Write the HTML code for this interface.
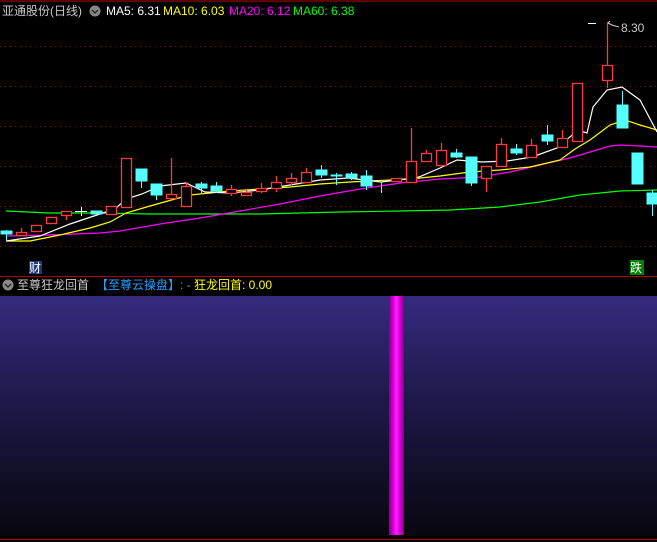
<!DOCTYPE html>
<html><head><meta charset="utf-8"><style>
html,body{margin:0;padding:0;background:#000;width:657px;height:542px;overflow:hidden;font-family:"Liberation Sans","Noto Sans CJK SC",sans-serif}
.t{position:absolute;font-size:12px;line-height:14px;white-space:nowrap}
</style></head><body>
<svg width="657" height="542" style="position:absolute;left:0;top:0">
<defs><linearGradient id="g" x1="0" y1="0" x2="0" y2="1"><stop offset="0" stop-color="#342b7e"/><stop offset="0.45" stop-color="#1d1848"/><stop offset="1" stop-color="#08070e"/></linearGradient>
<linearGradient id="b" x1="0" y1="0" x2="1" y2="0"><stop offset="0" stop-color="#80007f"/><stop offset="0.3" stop-color="#e000e0"/><stop offset="0.5" stop-color="#ff20ff"/><stop offset="0.7" stop-color="#e000e0"/><stop offset="1" stop-color="#80007f"/></linearGradient></defs>
<line x1="0" y1="1" x2="657" y2="1" stroke="#b00000"/>
<line x1="0" y1="276.5" x2="657" y2="276.5" stroke="#b00000"/>
<g stroke="#a00000" stroke-dasharray="1,4">
<line x1="0" y1="46.5" x2="657" y2="46.5"/><line x1="0" y1="86.5" x2="657" y2="86.5"/><line x1="0" y1="126.5" x2="657" y2="126.5"/><line x1="0" y1="166.5" x2="657" y2="166.5"/><line x1="0" y1="206.5" x2="657" y2="206.5"/><line x1="0" y1="246.5" x2="657" y2="246.5"/></g>
<rect x="0" y="296" width="657" height="240" fill="url(#g)"/>
<rect x="389" y="296" width="15" height="239" fill="url(#b)"/>
<line x1="0" y1="539.5" x2="657" y2="539.5" stroke="#b00000"/>
<g fill="none" stroke-width="1.2">
<polyline stroke="#00ff00" points="6,211 50,213 100,213 150,214 200,214 260,214 300,213 340,212 400,211 450,210 500,207 540,202 580,195 620,191 657,190"/>
<polyline stroke="#ff00ff" points="6,236 50,235 100,233 120,231 160,224 200,218 240,211 280,204 320,196 360,189 400,183 440,179 480,177 510,172 540,165 570,158 590,152 610,146 620,145 640,146 657,147"/>
<polyline stroke="#ffff00" points="6,241 30,241 60,235 90,228 110,222 126,213 150,206 175,199 190,195 230,191 260,189 290,187 320,184 350,182 390,180 410,179 440,176 470,172 500,170 530,167 560,160 575,149 590,140 610,125 625,120 640,125 657,130"/>
<polyline stroke="#ffffff" points="6,241 40,236 70,224 100,214 115,209 126,199 142,194 160,186 186,183 205,192 230,193 260,190 290,185 320,180 348,178 381,182 398,180 419,177 440,168 457,160 482,162 507,161 532,157 557,148 578,130 587,133 593,107 607,90 622,87 640,100 657,132"/>
</g>
<g stroke="#ff3a3a" fill="#000" stroke-width="1.3">
<line x1="21.5" y1="228" x2="21.5" y2="236"/><rect x="16.5" y="232.5" width="10" height="3"/>
<rect x="31.5" y="225.5" width="10" height="6"/>
<rect x="46.5" y="217.5" width="10" height="6"/>
<line x1="66.5" y1="211" x2="66.5" y2="220"/><rect x="61.5" y="211.5" width="10" height="4"/>
<rect x="106.5" y="206.5" width="10" height="8"/>
<rect x="121.5" y="158.5" width="10" height="49"/>
<line x1="171.5" y1="158" x2="171.5" y2="198"/><rect x="166.5" y="194.5" width="10" height="4"/>
<line x1="186.5" y1="182" x2="186.5" y2="206"/><rect x="181.5" y="186.5" width="10" height="20"/>
<line x1="231.5" y1="185" x2="231.5" y2="196"/><rect x="226.5" y="189.5" width="10" height="4"/>
<line x1="246.5" y1="190" x2="246.5" y2="196"/><rect x="241.5" y="192.5" width="10" height="3"/>
<line x1="261.5" y1="183" x2="261.5" y2="193"/><rect x="256.5" y="188.5" width="10" height="3"/>
<line x1="276.5" y1="176" x2="276.5" y2="192"/><rect x="271.5" y="182.5" width="10" height="6"/>
<line x1="291.5" y1="173" x2="291.5" y2="185"/><rect x="286.5" y="178.5" width="10" height="4"/>
<line x1="306.5" y1="168" x2="306.5" y2="183"/><rect x="301.5" y="172.5" width="10" height="10"/>
<rect x="391.5" y="178.5" width="10" height="3"/>
<line x1="411.5" y1="128" x2="411.5" y2="182"/><rect x="406.5" y="161.5" width="10" height="21"/>
<line x1="426.5" y1="150" x2="426.5" y2="162"/><rect x="421.5" y="153.5" width="10" height="8"/>
<line x1="441.5" y1="143" x2="441.5" y2="166"/><rect x="436.5" y="150.5" width="10" height="15"/>
<line x1="486.5" y1="166" x2="486.5" y2="192"/><rect x="481.5" y="166.5" width="10" height="12"/>
<line x1="501.5" y1="138" x2="501.5" y2="167"/><rect x="496.5" y="144.5" width="10" height="22"/>
<line x1="531.5" y1="139" x2="531.5" y2="157"/><rect x="526.5" y="145.5" width="10" height="12"/>
<line x1="562.5" y1="130" x2="562.5" y2="147"/><rect x="557.5" y="138.5" width="10" height="9"/>
<rect x="572.5" y="83.5" width="10" height="58"/>
<line x1="607.5" y1="22" x2="607.5" y2="88"/><rect x="602.5" y="65.5" width="10" height="15"/>
</g>
<g fill="#55ffff" stroke="#55ffff" shape-rendering="crispEdges">
<line x1="6.5" y1="230" x2="6.5" y2="240"/><rect x="1" y="231" width="11" height="3"/>
<rect x="91" y="211" width="11" height="3"/>
<line x1="141.5" y1="169" x2="141.5" y2="188"/><rect x="136" y="169" width="11" height="12"/>
<line x1="156.5" y1="184" x2="156.5" y2="200"/><rect x="151" y="184" width="11" height="11"/>
<line x1="201.5" y1="182" x2="201.5" y2="193"/><rect x="196" y="184" width="11" height="4"/>
<line x1="216.5" y1="182" x2="216.5" y2="193"/><rect x="211" y="186" width="11" height="5"/>
<line x1="321.5" y1="165" x2="321.5" y2="178"/><rect x="316" y="170" width="11" height="5"/>
<line x1="336.5" y1="173" x2="336.5" y2="185"/><rect x="331" y="175" width="11" height="1"/>
<line x1="351.5" y1="172" x2="351.5" y2="180"/><rect x="346" y="174" width="11" height="4"/>
<line x1="366.5" y1="170" x2="366.5" y2="190"/><rect x="361" y="176" width="11" height="10"/>
<line x1="381.5" y1="182" x2="381.5" y2="193"/>
<line x1="456.5" y1="149" x2="456.5" y2="158"/><rect x="451" y="153" width="11" height="4"/>
<line x1="471.5" y1="157" x2="471.5" y2="186"/><rect x="466" y="157" width="11" height="26"/>
<line x1="516.5" y1="144" x2="516.5" y2="155"/><rect x="511" y="149" width="11" height="4"/>
<line x1="547.5" y1="125" x2="547.5" y2="145"/><rect x="542" y="135" width="11" height="6"/>
<line x1="622.5" y1="91" x2="622.5" y2="128"/><rect x="617" y="105" width="11" height="23"/>
<rect x="632" y="153" width="11" height="31"/>
<line x1="652.5" y1="190" x2="652.5" y2="216"/><rect x="647" y="193" width="10" height="11"/>
</g>
<line x1="75" y1="211.5" x2="87" y2="211.5" stroke="#fff"/><line x1="81.5" y1="207" x2="81.5" y2="216" stroke="#fff"/>
<line x1="588" y1="23.5" x2="596" y2="23.5" stroke="#fff"/>
<path d="M608,23 L610,21 M608,23 L612,25 L619,27" stroke="#ccc" fill="none"/>
<circle cx="95" cy="11" r="5.5" fill="#888"/><path d="M92,10 L95,13 L98,10" stroke="#222" fill="none" stroke-width="1.3"/>
<circle cx="8" cy="285" r="5.5" fill="#888"/><path d="M5,284 L8,287 L11,284" stroke="#222" fill="none" stroke-width="1.3"/>
<rect x="29" y="261" width="13" height="13" fill="#1a3a7a"/>
<rect x="630" y="260" width="14" height="15" fill="#008000"/>
</svg>
<div class="t" style="left:2px;top:4px;color:#c8c8c8">亚通股份(日线)</div>
<div class="t" style="left:106px;top:4px;color:#fff">MA5: 6.31</div>
<div class="t" style="left:163px;top:4px;color:#ffff00">MA10: 6.03</div>
<div class="t" style="left:229px;top:4px;color:#ff00ff">MA20: 6.12</div>
<div class="t" style="left:293px;top:4px;color:#00ff00">MA60: 6.38</div>
<div class="t" style="left:621px;top:21px;color:#c8c8c8">8.30</div>
<div class="t" style="left:29px;top:261px;color:#fff">财</div>
<div class="t" style="left:630px;top:261px;color:#fff">跌</div>
<div class="t" style="left:17px;top:278px;color:#c8c8c8">至尊狂龙回首</div>
<div class="t" style="left:96px;top:278px;color:#22a0ff">【至尊云操盘】<span style="color:#22a0ff">: -</span></div>
<div class="t" style="left:194px;top:278px;color:#ffff00">狂龙回首: 0.00</div>
</body></html>
